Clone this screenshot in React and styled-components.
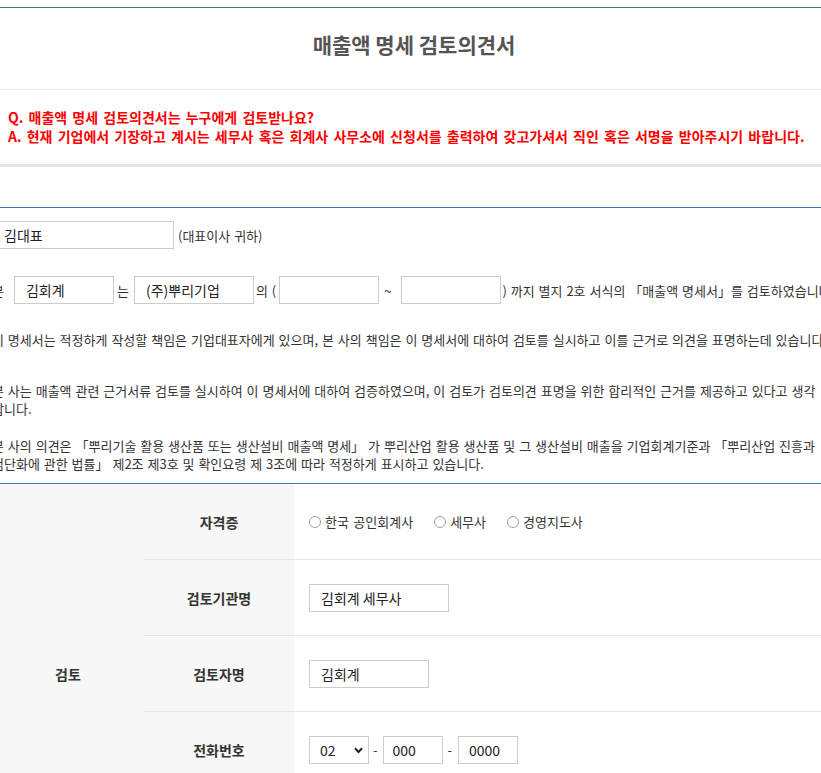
import React from 'react';
import styled, { createGlobalStyle } from 'styled-components';

const Global = createGlobalStyle`
  html, body { margin: 0; padding: 0; background: #fff; overflow-x: hidden; }
  body { font-family: "Noto Sans CJK KR", "Noto Sans", sans-serif; color: #333; }
  * { box-sizing: border-box; }
`;

const Page = styled.div`
  width: 844px;
  margin: 7px 0 0 -8px;
  border-top: 1px solid #4e6e8e;
`;

const TitleBar = styled.header`
  padding: 22px 0 31px;
  border-bottom: 1px solid #e5e5e5;
  text-align: center;
`;

const Title = styled.h1`
  margin: 0;
  font-size: 21px;
  line-height: 28px;
  font-weight: 700;
  color: #555;
`;

const Notice = styled.div`
  padding: 18px 16px;
  border-bottom: 3px solid #e5e5e5;
  color: #ff0000;
  font-weight: 700;
  font-size: 14px;
  line-height: 19px;
  word-spacing: 2px;
  white-space: nowrap;
`;

const NoticeLine = styled.p`
  margin: 0;
`;

const Form = styled.section`
  margin-top: 40px;
  border-top: 1px solid #3a78a5;
  padding-top: 13px;
  font-size: 13px;
  color: #333;
`;

const Row = styled.div`
  display: flex;
  align-items: center;
  white-space: nowrap;
  margin-top: ${p => p.$mt || 0}px;
  word-spacing: 1px;
`;

const TextInput = styled.input`
  width: ${p => p.$w}px;
  height: 28px;
  margin: 0 ${p => p.$mr || 0}px 0 ${p => p.$ml || 0}px;
  padding: 0 ${p => p.$pl || 11}px;
  border: 1px solid #ccc;
  background: #fff;
  font-family: inherit;
  font-size: 14px;
  color: #222;
  outline: none;
  flex: none;
`;

const Para = styled.p`
  margin: ${p => p.$mt}px 0 0;
  line-height: 18px;
  white-space: nowrap;
  word-spacing: 1px;
`;

const Line = styled.span`
  display: block;
`;

const Review = styled.div`
  margin-top: 10px;
  border-top: 1px solid #3a78a5;
  display: grid;
  grid-template-columns: 152px 150px 1fr;
  grid-auto-rows: 76px;
`;

const GroupHead = styled.div`
  grid-row: span 5;
  background: #f7f7f7;
  display: flex;
  align-items: center;
  justify-content: center;
  font-size: 14px;
  font-weight: 700;
  color: #333;
`;

const Label = styled.div`
  background: #f7f7f7;
  border-bottom: 1px solid #e5e5e5;
  display: flex;
  align-items: center;
  justify-content: center;
  font-size: 14px;
  font-weight: 700;
  color: #333;
`;

const Value = styled.div`
  border-bottom: 1px solid #e5e5e5;
  display: flex;
  align-items: center;
  padding-left: 15px;
  font-size: 13px;
  color: #333;
  white-space: nowrap;
`;

const RadioGroup = styled.div`
  display: flex;
  align-items: center;
  gap: 21px;
`;

const RadioLabel = styled.label`
  display: flex;
  align-items: center;
  gap: 4px;
  word-spacing: 1.5px;
`;

const Radio = styled.input.attrs({ type: 'radio' })`
  appearance: none;
  width: 12px;
  height: 12px;
  margin: 0;
  border: 1px solid #a0a0a0;
  border-radius: 50%;
  background: #fff;
`;

const SelectWrap = styled.div`
  position: relative;
  width: 60px;
  height: 28px;
  flex: none;
`;

const Select = styled.select`
  appearance: none;
  width: 100%;
  height: 100%;
  border: 1px solid #ccc;
  background: #fff;
  padding: 0 0 0 10px;
  font-family: inherit;
  font-size: 14px;
  color: #222;
  outline: none;
`;

const Chevron = styled.svg`
  position: absolute;
  right: 6px;
  top: 11px;
  pointer-events: none;
`;

const Dash = styled.span`
  margin: 0 ${p => p.$mr}px 0 ${p => p.$ml}px;
  color: #333;
`;

export default function App() {
  return (
    <>
      <Global />
      <Page>
        <TitleBar>
          <Title>매출액 명세 검토의견서</Title>
        </TitleBar>
        <Notice>
          <NoticeLine>Q. 매출액 명세 검토의견서는 누구에게 검토받나요?</NoticeLine>
          <NoticeLine>A. 현재 기업에서 기장하고 계시는 세무사 혹은 회계사 사무소에 신청서를 출력하여 갖고가셔서 직인 혹은 서명을 받아주시기 바랍니다.</NoticeLine>
        </Notice>
        <Form>
          <Row>
            <TextInput $w={182} $mr={4} defaultValue="김대표" />
            <span>(대표이사 귀하)</span>
          </Row>
          <Row $mt={27}>
            <span>본</span>
            <TextInput $w={100} $ml={10} $mr={3} defaultValue="김회계" />
            <span>는</span>
            <TextInput $w={120} $ml={5} $mr={2} defaultValue="(주)뿌리기업" />
            <span>의 (</span>
            <TextInput $w={100} $ml={3} $mr={5} />
            <span>~</span>
            <TextInput $w={100} $ml={10} $mr={1} />
            <span>) 까지 별지 2호 서식의 「매출액 명세서」를 검토하였습니다.</span>
          </Row>
          <Para $mt={27}>
            <Line>이 명세서는 적정하게 작성할 책임은 기업대표자에게 있으며, 본 사의 책임은 이 명세서에 대하여 검토를 실시하고 이를 근거로 의견을 표명하는데 있습니다.</Line>
          </Para>
          <Para $mt={33}>
            <Line>본 사는 매출액 관련 근거서류 검토를 실시하여 이 명세서에 대하여 검증하였으며, 이 검토가 검토의견 표명을 위한 합리적인 근거를 제공하고 있다고 생각</Line>
            <Line>합니다.</Line>
          </Para>
          <Para $mt={19}>
            <Line>본 사의 의견은 「뿌리기술 활용 생산품 또는 생산설비 매출액 명세」 가 뿌리산업 활용 생산품 및 그 생산설비 매출을 기업회계기준과 「뿌리산업 진흥과</Line>
            <Line>첨단화에 관한 법률」 제2조 제3호 및 확인요령 제 3조에 따라 적정하게 표시하고 있습니다.</Line>
          </Para>
        </Form>
        <Review>
          <GroupHead>검토</GroupHead>
          <Label>자격증</Label>
          <Value>
            <RadioGroup>
              <RadioLabel><Radio name="cert" />한국 공인회계사</RadioLabel>
              <RadioLabel><Radio name="cert" />세무사</RadioLabel>
              <RadioLabel><Radio name="cert" />경영지도사</RadioLabel>
            </RadioGroup>
          </Value>
          <Label>검토기관명</Label>
          <Value>
            <TextInput $w={140} defaultValue="김회계 세무사" />
          </Value>
          <Label>검토자명</Label>
          <Value>
            <TextInput $w={120} defaultValue="김회계" />
          </Value>
          <Label>전화번호</Label>
          <Value>
            <SelectWrap>
              <Select defaultValue="02">
                <option>02</option>
                <option>031</option>
                <option>032</option>
                <option>010</option>
              </Select>
              <Chevron width="9" height="7" viewBox="0 0 9 7">
                <path d="M1 1.2 L4.5 5 L8 1.2" fill="none" stroke="#222" strokeWidth="2" />
              </Chevron>
            </SelectWrap>
            <Dash $ml={4} $mr={5}>-</Dash>
            <TextInput $w={60} $pl={9} defaultValue="000" />
            <Dash $ml={5} $mr={6}>-</Dash>
            <TextInput $w={60} $pl={10} defaultValue="0000" />
          </Value>
          <Label>검토일자</Label>
          <Value>
            <TextInput $w={140} />
          </Value>
        </Review>
      </Page>
    </>
  );
}
